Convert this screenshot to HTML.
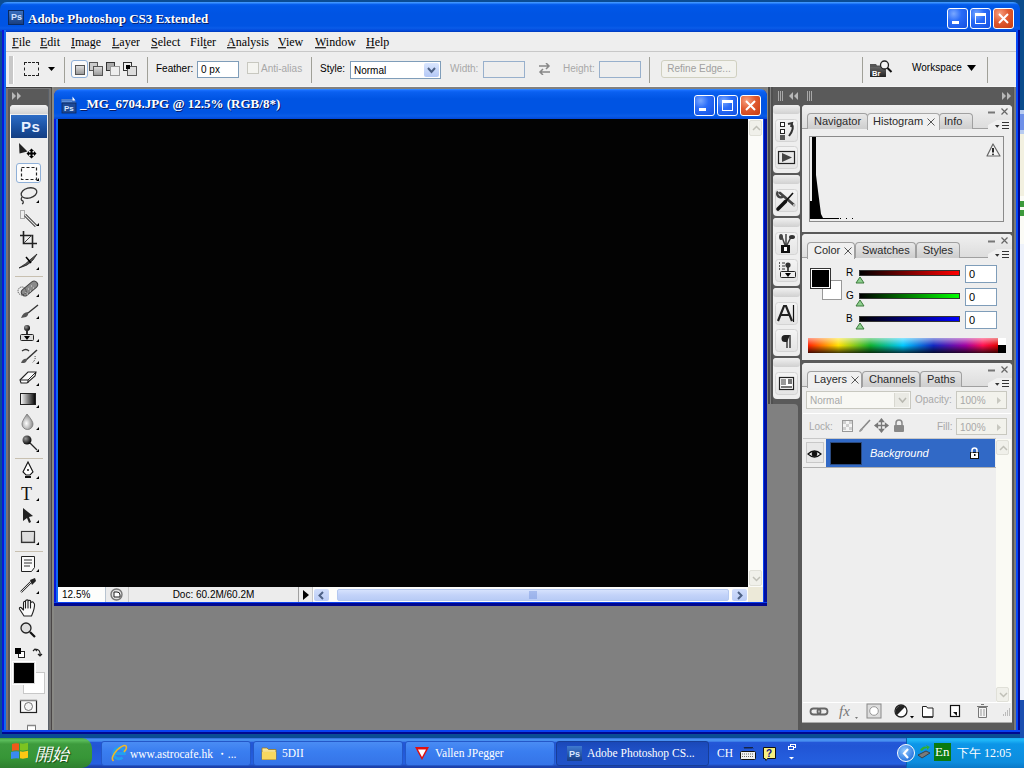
<!DOCTYPE html>
<html><head><meta charset="utf-8">
<style>
*{margin:0;padding:0;box-sizing:border-box}
html,body{width:1024px;height:768px;overflow:hidden;background:#0b4a8e;font-family:"Liberation Sans",sans-serif;font-size:11px;color:#000}
.a{position:absolute}
.serif{font-family:"Liberation Serif",serif}
/* main frame */
#frame{left:0;top:0;width:1024px;height:738px;background:#0a4c94}
#titlebar{left:0;top:2px;width:1020px;height:30px;border-radius:7px 7px 0 0;background:linear-gradient(#3d95ff 0,#3d95ff 1px,#0a62f0 2px,#0058e8 4px,#0054e3 12px,#0054e3 24px,#0a5ce8 26px,#0046d8 29px,#0036b0 30px)}
#lframe{left:2px;top:30px;width:4px;height:704px;background:linear-gradient(90deg,#0818d8 0,#0818d8 2px,#1068f0 2px)}
#rframe{left:1016px;top:30px;width:4px;height:704px;background:linear-gradient(90deg,#0848f8 0,#0848f8 2px,#000890 2px)}
#bframe{left:2px;top:730px;width:1018px;height:4px;background:linear-gradient(#0840f0 0,#0840f0 2px,#000890 2px)}
.ttext{color:#fff;font-weight:bold;font-size:13px;text-shadow:1px 1px 0 #0a1a60}
.xpbtn{width:21px;height:21px;border:1px solid #fff;border-radius:3px;background:radial-gradient(circle at 30% 25%,#7aa8ff 0,#2a6cf8 40%,#1450e0 100%)}
.xpclose{background:radial-gradient(circle at 30% 25%,#f8a080 0,#e05a30 45%,#c83c10 100%)}
#menubar{left:6px;top:32px;width:1010px;height:20px;background:#eeeeee;border-bottom:1px solid #c8c8c8}
.mi{top:3px;font-size:12px;font-family:"Liberation Serif",serif;transform:scaleY(1.1);transform-origin:0 0}
.mi u{text-decoration:underline}
#optbar{left:6px;top:52px;width:1010px;height:35px;background:#eeeeee;border-bottom:1px solid #f4f4f4}
.sep{width:1px;height:26px;top:5px;background:#a0a098}
.ob{font-size:10px}
.inp{background:#fff;border:1px solid #7f9db9;height:17px}
#work{left:7px;top:87px;width:1008px;height:643px;background:#808080}
</style></head><body>
<div class="a" id="frame"></div>
<div class="a" id="titlebar"></div>
<div class="a" id="lframe"></div>
<div class="a" id="rframe"></div>
<div class="a" id="bframe"></div>

<!-- title -->
<div class="a" style="left:8px;top:10px;width:16px;height:15px;background:linear-gradient(#3a70c0,#1a3f80);border:1px solid #0a2a60"><span class="a" style="left:2px;top:1px;color:#cfe0ff;font-size:9px;font-weight:bold">Ps</span></div>
<div class="a ttext serif" style="left:28px;top:11px">Adobe Photoshop CS3 Extended</div>
<div class="a xpbtn" style="left:947px;top:8px"><div class="a" style="left:4px;top:12px;width:7px;height:3px;background:#fff"></div></div>
<div class="a xpbtn" style="left:970px;top:8px"><div class="a" style="left:4px;top:4px;width:11px;height:11px;border:1px solid #fff;border-top-width:3px"></div></div>
<div class="a xpbtn xpclose" style="left:993px;top:8px"><svg class="a" style="left:4px;top:4px" width="11" height="11"><path d="M1 1L10 10M10 1L1 10" stroke="#fff" stroke-width="2"/></svg></div>

<!-- menubar -->
<div class="a" id="menubar"></div>
<div class="a mi" style="left:12px;top:34px"><u>F</u>ile</div>
<div class="a mi" style="left:40px;top:34px"><u>E</u>dit</div>
<div class="a mi" style="left:71px;top:34px"><u>I</u>mage</div>
<div class="a mi" style="left:112px;top:34px"><u>L</u>ayer</div>
<div class="a mi" style="left:151px;top:34px"><u>S</u>elect</div>
<div class="a mi" style="left:190px;top:34px">Fil<u>t</u>er</div>
<div class="a mi" style="left:227px;top:34px"><u>A</u>nalysis</div>
<div class="a mi" style="left:278px;top:34px"><u>V</u>iew</div>
<div class="a mi" style="left:315px;top:34px"><u>W</u>indow</div>
<div class="a mi" style="left:366px;top:34px"><u>H</u>elp</div>

<!-- options bar -->
<div class="a" id="optbar"></div>
<div class="a" style="left:9px;top:56px;width:5px;height:28px;background:#c8c8c8;border-right:1px solid #fff"></div>
<div class="a" style="left:24px;top:62px;width:15px;height:14px;border:1px dashed #222"></div>
<svg class="a" style="left:48px;top:67px" width="7" height="4"><path d="M0 0H7L3.5 4Z" fill="#000"/></svg>
<div class="a sep" style="left:64px;top:57px"></div>
<div class="a" style="left:71px;top:60px;width:17px;height:18px;border:1px solid #8fb0d8;border-radius:3px;background:#fafafa"><div class="a" style="left:3px;top:4px;width:10px;height:10px;background:linear-gradient(#ddd,#999);border:1px solid #555"></div></div>
<div class="a" style="left:89px;top:62px;width:9px;height:9px;background:#ccc;border:1px solid #555"></div>
<div class="a" style="left:93px;top:66px;width:10px;height:10px;background:linear-gradient(#ddd,#999);border:1px solid #555"></div>
<div class="a" style="left:106px;top:62px;width:9px;height:9px;background:#aaa;border:1px solid #333"></div>
<div class="a" style="left:110px;top:66px;width:10px;height:10px;background:#eee;border:1px solid #999"></div>
<div class="a" style="left:123px;top:62px;width:9px;height:9px;background:#eee;border:1px solid #333"></div>
<div class="a" style="left:127px;top:66px;width:10px;height:10px;background:#ddd;border:1px solid #555"></div>
<div class="a" style="left:126px;top:65px;width:4px;height:4px;background:#000"></div>
<div class="a sep" style="left:147px;top:57px"></div>
<div class="a ob" style="left:156px;top:63px">Feather:</div>
<div class="a inp" style="left:197px;top:61px;width:42px"><span class="a" style="left:3px;top:2px;font-size:10px">0 px</span></div>
<div class="a" style="left:247px;top:62px;width:12px;height:12px;border:1px solid #c8c8c0;background:#f4f4f0"></div>
<div class="a ob" style="left:261px;top:63px;color:#a8a8a8">Anti-alias</div>
<div class="a sep" style="left:311px;top:57px"></div>
<div class="a ob" style="left:320px;top:63px">Style:</div>
<div class="a inp" style="left:350px;top:61px;width:91px;height:18px"><span class="a" style="left:3px;top:3px;font-size:10px">Normal</span><div class="a" style="left:73px;top:1px;width:15px;height:14px;background:linear-gradient(#dae6fe,#b4c8f6);border-radius:2px"><svg class="a" style="left:3px;top:4px" width="9" height="7"><path d="M1 1L4.5 5L8 1" stroke="#4d6185" stroke-width="2" fill="none"/></svg></div></div>
<div class="a ob" style="left:450px;top:63px;color:#a8a8a8">Width:</div>
<div class="a inp" style="left:483px;top:61px;width:42px;background:#eeeeee;border-color:#98b0cc"></div>
<svg class="a" style="left:538px;top:63px" width="13" height="12"><path d="M1 3H11M8 0L11 3L8 6M12 9H2M5 6L2 9L5 12" stroke="#888" stroke-width="1.5" fill="none"/></svg>
<div class="a ob" style="left:563px;top:63px;color:#a8a8a8">Height:</div>
<div class="a inp" style="left:599px;top:61px;width:42px;background:#eeeeee;border-color:#98b0cc"></div>
<div class="a sep" style="left:649px;top:57px"></div>
<div class="a" style="left:661px;top:60px;width:76px;height:18px;border:1px solid #d0d0c0;border-radius:3px;background:#f2f2ee;color:#a0a0a0;text-align:center;line-height:16px;font-size:10px">Refine Edge...</div>
<div class="a sep" style="left:862px;top:57px"></div>
<svg class="a" style="left:869px;top:59px" width="26" height="20">
<path d="M1 5H7L8 6.5H17V18H1Z" fill="#555"/><rect x="1" y="8" width="16" height="10" rx="1" fill="url(#gbr)"/>
<text x="3" y="16.5" font-family="Liberation Sans" font-size="7.5" font-weight="bold" fill="#fff">Br</text>
<circle cx="15.5" cy="6" r="4" fill="#f4f4f4" stroke="#222" stroke-width="1.3"/><path d="M18.5 9L22.5 13" stroke="#111" stroke-width="2"/>
<defs><linearGradient id="gbr" x1="0" y1="0" x2="0" y2="1"><stop offset="0" stop-color="#666"/><stop offset="1" stop-color="#222"/></linearGradient></defs>
</svg>
<div class="a ob" style="left:912px;top:62px">Workspace</div>
<svg class="a" style="left:967px;top:65px" width="9" height="6"><path d="M0 0H9L4.5 6Z" fill="#000"/></svg>
<div class="a sep" style="left:987px;top:57px"></div>

<!-- workspace -->
<div class="a" id="work"></div>


<!-- toolbox -->
<div class="a" style="left:6px;top:87px;width:48px;height:643px;background:linear-gradient(90deg,#7a7070 0,#7a7070 2px,#5a5a5a 2px,#5a5a5a 42px,#5a6068 42px,#5a6068 43px,#727272 43px,#727272 45px,#4a4646 45px,#4a4646 46px,#888884 46px)"></div>
<div class="a" style="left:10px;top:105px;width:38px;height:625px;background:#eeeeee;border-left:1px solid #fff;border-radius:4px 4px 0 0"></div>
<div class="a" style="left:10px;top:105px;width:38px;height:9px;background:linear-gradient(#f2f2f2,#d2d2d2);border-radius:4px 4px 0 0"></div>
<div class="a" style="left:11px;top:115px;width:36px;height:23px;background:linear-gradient(#2c6cc6,#1a4f9e 60%,#143e82)"><span class="a" style="left:10px;top:3px;color:#e8f0ff;font-size:15px;font-weight:bold;letter-spacing:0.5px;font-family:'Liberation Sans',sans-serif">Ps</span></div>
<div class="a" style="left:16px;top:163px;width:25px;height:20px;border:1px solid #8fb0d8;border-radius:3px;background:#fcfcfc"></div>
<div class="a" style="left:15px;top:276px;width:28px;height:1px;background:#c8c0b0"></div>
<div class="a" style="left:15px;top:458px;width:28px;height:1px;background:#c8c0b0"></div>
<div class="a" style="left:15px;top:551px;width:28px;height:1px;background:#c8c0b0"></div>
<div class="a" style="left:23px;top:672px;width:22px;height:22px;background:#fff;border:1px solid #c8c8c8"></div>
<div class="a" style="left:13px;top:662px;width:22px;height:22px;background:#000;border:1px solid #d8d8d8;outline:1px solid #fff"></div>

<div class="a" style="left:6px;top:87px;width:46px;height:1px;background:#404040"></div><div class="a" style="left:8px;top:88px;width:42px;height:1px;background:#7a7a7a"></div><div class="a" style="left:769px;top:87px;width:247px;height:1px;background:#404040"></div><div class="a" style="left:771px;top:88px;width:242px;height:1px;background:#7a7a7a"></div>
<!-- doc window -->
<div class="a" style="left:54px;top:89px;width:713px;height:517px;border-radius:7px 7px 0 0;background:linear-gradient(90deg,#0818d8 0,#0818d8 2px,#1068f0 2px,#1068f0 4px,transparent 4px,transparent 709px,#0840f0 709px,#0840f0 710.5px,#0010a0 710.5px)"></div><div class="a" style="left:54px;top:602px;width:713px;height:4px;background:linear-gradient(#0840f0 0,#0840f0 1.5px,#000890 1.5px)"></div>
<div class="a" style="left:54px;top:89px;width:713px;height:30px;border-radius:7px 7px 0 0;background:linear-gradient(#3d95ff 0,#1a70ff 1px,#0a60f0 3px,#0054e3 10px,#0054e3 24px,#0a5ce8 27px,#0046d8 30px)"></div>
<div class="a" style="left:58px;top:119px;width:690px;height:468px;background:#030303"></div>
<div class="a" style="left:748px;top:119px;width:15px;height:468px;background:#fbfbf8"></div>
<div class="a" style="left:749px;top:120px;width:13px;height:16px;background:#f0f0ea;border:1px solid #e0e0d8;border-radius:2px"><svg class="a" style="left:2px;top:4px" width="9" height="6"><path d="M1 5L4.5 1.5L8 5" stroke="#c0c0b8" stroke-width="1.5" fill="none"/></svg></div>
<div class="a" style="left:749px;top:570px;width:13px;height:16px;background:#f0f0ea;border:1px solid #e0e0d8;border-radius:2px"><svg class="a" style="left:2px;top:5px" width="9" height="6"><path d="M1 1L4.5 4.5L8 1" stroke="#c0c0b8" stroke-width="1.5" fill="none"/></svg></div>
<div class="a" style="left:58px;top:587px;width:705px;height:15px;background:#fdfdfb"></div>
<div class="a" style="left:105px;top:587px;width:23px;height:15px;background:#ebebeb;border-left:1px solid #b8c4d0"></div>
<div class="a" style="left:128px;top:587px;width:170px;height:15px;background:#ececec;border-left:1px solid #c8c8c8;text-align:center;line-height:15px;font-size:10px">Doc: 60.2M/60.2M</div>
<div class="a" style="left:298px;top:587px;width:15px;height:15px;background:#ececec;border-left:1px solid #a0a0a0;border-right:1px solid #c8c8c8"><svg class="a" style="left:4px;top:3px" width="7" height="10"><path d="M0 0L6 5L0 10Z" fill="#000"/></svg></div>
<div class="a" style="left:314px;top:589px;width:15px;height:12px;background:linear-gradient(#d0ddfb,#bccdf6);border-radius:2px"><svg class="a" style="left:4px;top:2px" width="7" height="9"><path d="M5 1L1.5 4.5L5 8" stroke="#4d6185" stroke-width="2" fill="none"/></svg></div>
<div class="a" style="left:337px;top:589px;width:392px;height:12px;background:linear-gradient(#d6e2fd,#c3d3f9 50%,#b8cbf5);border-radius:2px;border:1px solid #b4c8f0"></div>
<svg class="a" style="left:529px;top:591px" width="9" height="8"><path d="M1 0V8M3 0V8M5 0V8M7 0V8" stroke="#7b98e0" stroke-width="1"/></svg>
<div class="a" style="left:732px;top:589px;width:15px;height:12px;background:linear-gradient(#d0ddfb,#bccdf6);border-radius:2px"><svg class="a" style="left:4px;top:2px" width="7" height="9"><path d="M2 1L5.5 4.5L2 8" stroke="#4d6185" stroke-width="2" fill="none"/></svg></div>
<div class="a" style="left:748px;top:587px;width:15px;height:15px;background:#ece9d8"></div>
<div class="a" style="left:62px;top:589px;font-size:10px">12.5%</div>
<div class="a serif ttext" style="left:80px;top:96px;font-size:13px">_MG_6704.JPG @ 12.5% (RGB/8*)</div>
<svg class="a" style="left:108px;top:587px" width="17" height="15"><circle cx="8.5" cy="7.5" r="5.5" fill="#e0e0e0" stroke="#777" stroke-width="1.4"/><path d="M6 5H9A3 3 0 0 1 12 8V10H6Z" fill="#fff" stroke="#222" stroke-width="1"/></svg>
<svg class="a" style="left:59px;top:96px" width="18" height="18">
<path d="M2 3H14L17 6V7H2Z" fill="#3a6cc0"/><path d="M3 4H13M3 5.5H13" stroke="#6a9ae0" stroke-width="0.8"/>
<path d="M13.5 0.5L16.5 4.5H13.5Z" fill="#fff"/>
<rect x="3" y="7" width="14" height="10" fill="#1e4a96" stroke="#0e2a60" stroke-width="0.8"/>
<text x="5" y="15" font-family="Liberation Sans" font-size="8" font-weight="bold" fill="#d8e6ff">Ps</text>
</svg>
<div class="a xpbtn" style="left:694px;top:95px"><div class="a" style="left:4px;top:12px;width:7px;height:3px;background:#fff"></div></div>
<div class="a xpbtn" style="left:717px;top:95px"><div class="a" style="left:4px;top:4px;width:11px;height:11px;border:1px solid #fff;border-top-width:3px"></div></div>
<div class="a xpbtn xpclose" style="left:740px;top:95px"><svg class="a" style="left:4px;top:4px" width="11" height="11"><path d="M1 1L10 10M10 1L1 10" stroke="#fff" stroke-width="2"/></svg></div>

<!-- right dock -->
<div class="a" style="left:769px;top:87px;width:247px;height:643px;background:#5a5a5a"></div><div class="a" style="left:1013px;top:87px;width:3px;height:643px;background:linear-gradient(90deg,#555 0,#555 0.5px,#7a7a7a 0.5px,#7a7a7a 2.5px,#504840 2.5px)"></div><div class="a" style="left:767px;top:87px;width:6px;height:317px;background:linear-gradient(90deg,#888880 0,#888880 1.5px,#484848 1.5px,#484848 3px,#808080 3px,#808080 4.5px,#505050 4.5px)"></div>
<div class="a" style="left:769px;top:404px;width:29px;height:326px;background:#808080;border-top-right-radius:4px"></div><div class="a" style="left:798px;top:404px;width:4px;height:326px;background:#585858"></div>
<div class="a" style="left:773px;top:105px;width:27px;height:68px;background:#eeeeee;border-radius:4px"></div>
<div class="a" style="left:773px;top:175px;width:27px;height:41px;background:#eeeeee;border-radius:4px"></div>
<div class="a" style="left:773px;top:218px;width:27px;height:68px;background:#eeeeee;border-radius:4px"></div>
<div class="a" style="left:773px;top:288px;width:27px;height:68px;background:#eeeeee;border-radius:4px"></div>
<div class="a" style="left:773px;top:358px;width:27px;height:41px;background:#eeeeee;border-radius:4px"></div>


<!-- dock top bar -->
<svg class="a" style="left:769px;top:87px" width="247" height="18">
<path d="M9.5 4V14M11.5 4V14M13.5 4V14M38.5 4V14M40.5 4V14M42.5 4V14" stroke="#a8a8a8" stroke-width="1"/>
<path d="M20 9L24 5V13Z M25 9L29 5V13Z" fill="#b8b8b8"/>
<path d="M237 9L233 5V13Z M242 9L238 5V13Z" fill="#b8b8b8"/>
</svg>
<svg class="a" style="left:7px;top:87px" width="45" height="18">
<path d="M5 5L9 9L5 13Z M10 5L14 9L10 13Z" fill="#b8b8b8"/>
</svg>

<!-- panels common -->
<style>
.pnl{background:#eeeeee;border-radius:4px 4px 0 0}
.tab{white-space:nowrap;height:16px;top:0;border:1px solid #a0a0a0;border-bottom:none;border-radius:4px 4px 0 0;background:linear-gradient(#e8e8e8,#cdcdcd);font-size:11px;line-height:15px;padding-left:6px;color:#2a2a2a}
.tab.on{background:#f0f0f0}
.pmin{width:9px;height:2px;background:#777}
.pfld{background:#fff;border:1px solid #7f9db9}
.dis{color:#a8a8a8}
</style>

<!-- histogram panel -->
<div class="a pnl" style="left:802px;top:105px;width:210px;height:127px"></div>
<div class="a" style="left:802px;top:105px;width:210px;height:24px;background:linear-gradient(#f0f0f0,#dcdcdc);border-radius:4px 4px 0 0"></div>
<div class="a" style="left:802px;top:128px;width:210px;height:1px;background:#a0a0a0"></div>
<div class="a tab" style="left:807px;top:113px;width:61px">Navigator</div>
<div class="a tab" style="left:939px;top:113px;width:34px;padding-left:4px">Info</div>
<div class="a tab on" style="left:867px;top:113px;width:73px;height:17px;border-color:#a8a8a8;padding-left:5px">Histogram<svg style="margin-left:4px;vertical-align:-1px" width="8" height="8"><path d="M0.5 0.5L7.5 7.5M7.5 0.5L0.5 7.5" stroke="#555" stroke-width="1"/></svg></div>
<div class="a" style="left:809px;top:136px;width:195px;height:86px;border:1px solid #8a8a8a;background:#eeeeee"></div>

<!-- color panel -->
<div class="a pnl" style="left:802px;top:234px;width:210px;height:126px"></div>
<div class="a" style="left:802px;top:234px;width:210px;height:24px;background:linear-gradient(#f0f0f0,#dcdcdc);border-radius:4px 4px 0 0"></div>
<div class="a" style="left:802px;top:257px;width:210px;height:1px;background:#a0a0a0"></div>
<div class="a tab on" style="left:807px;top:242px;width:48px;height:17px">Color<svg style="margin-left:4px;vertical-align:-1px" width="8" height="8"><path d="M0.5 0.5L7.5 7.5M7.5 0.5L0.5 7.5" stroke="#555" stroke-width="1"/></svg></div>
<div class="a tab" style="left:855px;top:242px;width:61px">Swatches</div>
<div class="a tab" style="left:916px;top:242px;width:44px">Styles</div>
<div class="a" style="left:822px;top:280px;width:20px;height:20px;background:#fff;border:1px solid #999"></div>
<div class="a" style="left:811px;top:269px;width:19px;height:19px;background:#000;border:1px solid #fff;outline:1px solid #333"></div>
<div class="a" style="left:846px;top:267px;font-size:10px">R</div>
<div class="a" style="left:846px;top:290px;font-size:10px">G</div>
<div class="a" style="left:846px;top:313px;font-size:10px">B</div>
<div class="a" style="left:859px;top:270px;width:101px;height:6px;background:linear-gradient(90deg,#000,#ff0000);border:1px solid #333"></div>
<div class="a" style="left:859px;top:293px;width:101px;height:6px;background:linear-gradient(90deg,#000,#00ff00);border:1px solid #333"></div>
<div class="a" style="left:859px;top:316px;width:101px;height:6px;background:linear-gradient(90deg,#000,#0000ff);border:1px solid #333"></div>
<svg class="a" style="left:855px;top:276px" width="10" height="8"><path d="M5 1L9 7H1Z" fill="#8fd08f" stroke="#3a7a3a"/></svg>
<svg class="a" style="left:855px;top:299px" width="10" height="8"><path d="M5 1L9 7H1Z" fill="#8fd08f" stroke="#3a7a3a"/></svg>
<svg class="a" style="left:855px;top:322px" width="10" height="8"><path d="M5 1L9 7H1Z" fill="#8fd08f" stroke="#3a7a3a"/></svg>
<div class="a pfld" style="left:965px;top:265px;width:32px;height:18px"><span class="a" style="left:3px;top:2px">0</span></div>
<div class="a pfld" style="left:965px;top:288px;width:32px;height:18px"><span class="a" style="left:3px;top:2px">0</span></div>
<div class="a pfld" style="left:965px;top:311px;width:32px;height:18px"><span class="a" style="left:3px;top:2px">0</span></div>
<div class="a" style="left:808px;top:338px;width:190px;height:15px;background:linear-gradient(90deg,#ff2000 0%,#ffe000 16%,#10b030 33%,#00c8ff 50%,#1028c0 66%,#a000a0 83%,#ff1050 92%,#e00000 100%)"></div>
<div class="a" style="left:808px;top:338px;width:190px;height:15px;background:linear-gradient(rgba(255,255,255,.55) 0,rgba(255,255,255,.1) 40%,rgba(0,0,0,0) 50%,rgba(0,0,0,.75) 100%)"></div>
<div class="a" style="left:998px;top:338px;width:8px;height:7px;background:#fff"></div>
<div class="a" style="left:998px;top:345px;width:8px;height:8px;background:#000"></div>

<!-- layers panel -->
<div class="a pnl" style="left:802px;top:363px;width:210px;height:360px;border-bottom:1px solid #aaa"></div>
<div class="a" style="left:802px;top:363px;width:210px;height:24px;background:linear-gradient(#f0f0f0,#dcdcdc);border-radius:4px 4px 0 0"></div>
<div class="a" style="left:802px;top:386px;width:210px;height:1px;background:#a0a0a0"></div>
<div class="a tab on" style="left:807px;top:371px;width:55px;height:17px">Layers<svg style="margin-left:4px;vertical-align:-1px" width="8" height="8"><path d="M0.5 0.5L7.5 7.5M7.5 0.5L0.5 7.5" stroke="#555" stroke-width="1"/></svg></div>
<div class="a tab" style="left:862px;top:371px;width:58px">Channels</div>
<div class="a tab" style="left:920px;top:371px;width:42px">Paths</div>
<div class="a" style="left:806px;top:391px;width:105px;height:18px;border:1px solid #c8c8c0;background:#f8f8f4"><span class="a dis" style="left:3px;top:3px;font-size:10px">Normal</span><div class="a" style="left:87px;top:1px;width:15px;height:14px;background:#eaeae4;border-left:1px solid #d8d8d0"><svg class="a" style="left:3px;top:4px" width="9" height="7"><path d="M1 1L4.5 5L8 1" stroke="#b8b8b0" stroke-width="1.5" fill="none"/></svg></div></div>
<div class="a dis" style="left:915px;top:394px;font-size:10px">Opacity:</div>
<div class="a" style="left:956px;top:391px;width:51px;height:18px;border:1px solid #c8c8c0;background:#f2f2ec"><span class="a dis" style="left:3px;top:3px;font-size:10px">100%</span><svg class="a" style="left:39px;top:4px" width="6" height="9"><path d="M1 1L5 4.5L1 8Z" fill="#c8c8c0"/></svg></div>
<div class="a" style="left:803px;top:413px;width:208px;height:1px;background:#c8c8c8;border-bottom:1px solid #fff"></div>
<div class="a dis" style="left:809px;top:421px;font-size:10px">Lock:</div>
<div class="a dis" style="left:937px;top:421px;font-size:10px">Fill:</div>
<div class="a" style="left:956px;top:418px;width:51px;height:17px;border:1px solid #c8c8c0;background:#f2f2ec"><span class="a dis" style="left:3px;top:3px;font-size:10px">100%</span><svg class="a" style="left:39px;top:4px" width="6" height="9"><path d="M1 1L5 4.5L1 8Z" fill="#c8c8c0"/></svg></div>
<div class="a" style="left:803px;top:438px;width:193px;height:1px;background:#c8c8c8"></div>
<div class="a" style="left:803px;top:467px;width:193px;height:1px;background:#b0b0b0"></div>
<div class="a" style="left:806px;top:442px;width:18px;height:21px;border:1px solid #c8c8c8;background:#e8e8e8"></div>
<div class="a" style="left:826px;top:439px;width:169px;height:28px;background:#3169c6"></div>
<div class="a" style="left:830px;top:442px;width:32px;height:23px;background:#000;border:1px solid #2a4a80"></div>
<div class="a" style="left:870px;top:447px;color:#fff;font-style:italic;font-size:11px">Background</div>
<div class="a" style="left:996px;top:439px;width:15px;height:264px;background:#fafaf4"></div>
<div class="a" style="left:996px;top:440px;width:13px;height:15px;background:#f0f0ea;border:1px solid #e0e0d8;border-radius:2px"><svg class="a" style="left:2px;top:4px" width="9" height="6"><path d="M1 5L4.5 1.5L8 5" stroke="#c0c0b8" stroke-width="1.5" fill="none"/></svg></div>
<div class="a" style="left:996px;top:687px;width:13px;height:15px;background:#f0f0ea;border:1px solid #e0e0d8;border-radius:2px"><svg class="a" style="left:2px;top:4px" width="9" height="6"><path d="M1 1L4.5 4.5L8 1" stroke="#c0c0b8" stroke-width="1.5" fill="none"/></svg></div>
<div class="a" style="left:803px;top:702px;width:208px;height:1px;background:#c0c0c0;border-bottom:1px solid #fff"></div>

<!-- taskbar -->
<div class="a" style="left:0;top:738px;width:1024px;height:30px;background:linear-gradient(#2a5ac8 0,#4890f0 1px,#4890f0 3px,#2458d8 4.5px,#2155d5 8px,#2560e0 26px,#1d44b0 28px,#1a3ea8 30px)"></div>
<div class="a" style="left:0;top:738px;width:92px;height:30px;border-radius:0 10px 10px 0;background:linear-gradient(#3c9a3c 0,#5dbf5d 2px,#3d9b3d 6px,#379637 20px,#2f7f2f 30px)"></div>
<div class="a serif" style="left:35px;top:743px;color:#fff;font-size:17px;font-style:italic;text-shadow:1px 1px 1px #1a4a1a">開始</div>
<div class="a" style="left:101px;top:741px;width:150px;height:25px;border-radius:3px;background:linear-gradient(#4a8cf4,#3a7ef0 40%,#3574e8);border:1px solid #2458c8"></div>
<div class="a" style="left:253px;top:741px;width:150px;height:25px;border-radius:3px;background:linear-gradient(#4a8cf4,#3a7ef0 40%,#3574e8);border:1px solid #2458c8"></div>
<div class="a" style="left:405px;top:741px;width:150px;height:25px;border-radius:3px;background:linear-gradient(#4a8cf4,#3a7ef0 40%,#3574e8);border:1px solid #2458c8"></div>
<div class="a" style="left:556px;top:741px;width:153px;height:25px;border-radius:3px;background:linear-gradient(#1a48b8,#1e4fc4 30%,#2052c8);border:1px solid #173e98"></div>
<div class="a serif" style="left:130px;top:747px;color:#fff;font-size:11.5px">www.astrocafe.hk ・...</div>
<div class="a serif" style="left:282px;top:747px;color:#fff;font-size:11.5px">5DII</div>
<div class="a serif" style="left:435px;top:747px;color:#fff;font-size:11.5px">Vallen JPegger</div>
<div class="a serif" style="left:587px;top:747px;color:#fff;font-size:11.5px">Adobe Photoshop CS...</div>
<div class="a serif" style="left:717px;top:747px;color:#fff;font-size:11.5px">CH</div>
<div class="a" style="left:906px;top:738px;width:118px;height:30px;background:linear-gradient(#18a8f0 0,#20b8f8 2px,#0c96e8 6px,#0d8dde 24px,#0a78c8 30px);border-left:1px solid #0a60b0"></div>
<div class="a" style="left:897px;top:744px;width:18px;height:18px;border-radius:50%;background:radial-gradient(circle at 40% 35%,#8ec8ff,#2f7ae0 70%);border:1px solid #fff"><svg class="a" style="left:4px;top:3px" width="9" height="11"><path d="M6 1L2 5.5L6 10" stroke="#fff" stroke-width="2.2" fill="none"/></svg></div>
<div class="a" style="left:934px;top:743px;width:17px;height:18px;background:#0a7a10"><span class="a serif" style="left:1px;top:1px;color:#fff;font-size:13px">En</span></div>
<div class="a serif" style="left:957px;top:745px;color:#fff;font-size:12px">下午 12:05</div>


<!-- toolbox icons -->
<svg class="a" style="left:0;top:0" width="60" height="730">
<defs>
<linearGradient id="gmet" x1="0" y1="0" x2="0" y2="1"><stop offset="0" stop-color="#fff"/><stop offset="1" stop-color="#555"/></linearGradient>
<linearGradient id="ggrad" x1="0" y1="0" x2="1" y2="0"><stop offset="0" stop-color="#fff"/><stop offset="1" stop-color="#000"/></linearGradient>
<radialGradient id="gball" cx="0.35" cy="0.35" r="0.7"><stop offset="0" stop-color="#999"/><stop offset="1" stop-color="#000"/></radialGradient>
<radialGradient id="gdrop" cx="0.4" cy="0.6" r="0.6"><stop offset="0" stop-color="#fff"/><stop offset="1" stop-color="#888"/></radialGradient>
</defs>
<g fill="#000">
<!-- corner triangles -->
<path d="M39 181h-3l3-3z M39 203h-3l3-3z M39 226h-3l3-3z M39 270h-3l3-3z M39 297h-3l3-3z M39 319h-3l3-3z M39 342h-3l3-3z M39 364h-3l3-3z M39 386h-3l3-3z M39 408h-3l3-3z M39 430h-3l3-3z M39 452h-3l3-3z M39 479h-3l3-3z M39 501h-3l3-3z M39 523h-3l3-3z M39 545h-3l3-3z M39 572h-3l3-3z M39 594h-3l3-3z"/>
</g>
<!-- move -->
<path d="M19 143L27.5 151.5L19.5 153.5Z" fill="#222"/>
<path d="M31.5 150.5V156.5M28.5 153.5H34.5" stroke="#000" stroke-width="2"/>
<path d="M31.5 148.5l-2.5 2.5h5zM31.5 158.5l-2.5-2.5h5zM26.5 153.5l2.5-2.5v5zM36.5 153.5l-2.5-2.5v5z" fill="#000"/>
<!-- marquee -->
<rect x="21.5" y="167.5" width="15" height="12" fill="none" stroke="#222" stroke-width="1.2" stroke-dasharray="3 2"/>
<!-- lasso -->
<ellipse cx="29" cy="193" rx="8" ry="5" fill="none" stroke="#333" stroke-width="1.3" transform="rotate(-15 29 193)"/>
<path d="M22 197q-2 3 1 4q1 2 -1 3" stroke="#333" stroke-width="1.2" fill="none"/>
<!-- magic wand -->
<path d="M25 215L36 226" stroke="#222" stroke-width="3"/><path d="M25 215L36 226" stroke="#ddd" stroke-width="1.2"/>
<rect x="20.5" y="210.5" width="4" height="8" fill="none" stroke="#666" stroke-width="1" stroke-dasharray="1 1"/>
<!-- crop -->
<path d="M20 235.5H32.5V248M23.5 231V243.5H37" stroke="#222" stroke-width="1.6" fill="none"/><path d="M24 243L32 235" stroke="#444" stroke-width="1"/>
<!-- slice -->
<path d="M19 268Q26 264 31 259L37 254L33 260Q28 266 19 268Z" fill="#555" stroke="#222" stroke-width="0.8"/><path d="M26 257L31 263" stroke="#000" stroke-width="1.5"/>
<!-- healing -->
<rect x="20" y="285" width="19" height="7" rx="3.5" fill="#8a8a8a" stroke="#444" transform="rotate(-40 29.5 288.5)"/><path d="M25 292h1M28 289h1M31 286h1M27 294h1M30 291h1M33 288h1" stroke="#ddd"/>
<circle cx="22" cy="291" r="4" fill="none" stroke="#333" stroke-dasharray="1 1"/>
<!-- brush -->
<path d="M38 305L28 313" stroke="#333" stroke-width="1.5"/><path d="M21 318q2-6 7-6q1 3-2 5z" fill="#555"/>
<!-- stamp -->
<circle cx="27" cy="328" r="3" fill="url(#gball)"/><path d="M27 330V335" stroke="#333" stroke-width="2"/>
<rect x="20.5" y="334.5" width="13" height="6" rx="1" fill="#ddd" stroke="#222"/><path d="M24 336H30L27 340Z" fill="#000"/>
<!-- history brush -->
<path d="M37 350L26 360" stroke="#333" stroke-width="1.5"/><path d="M21 363q2-5 6-4q0 3-3 4z" fill="#555"/>
<path d="M22 351q4-3 7 0" stroke="#333" stroke-width="1.3" fill="none"/><path d="M35 356q1 4-3 7" stroke="#333" stroke-dasharray="1 1" fill="none"/>
<!-- eraser -->
<path d="M20 380L28 372H36L35 376L27 383H21Z" fill="#fafafa" stroke="#222" stroke-width="1.1"/><path d="M20 380H28L36 372M28 380V383" stroke="#222" stroke-width="1" fill="none"/>
<!-- gradient -->
<rect x="20.5" y="393.5" width="15" height="11" fill="url(#ggrad)" stroke="#222"/>
<!-- blur -->
<path d="M27 414Q22 421 22 424A5 5 0 0 0 33 424Q33 421 27 414Z" fill="url(#gdrop)" stroke="#777" stroke-width="0.8"/>
<!-- dodge -->
<circle cx="27" cy="440" r="4.5" fill="url(#gball)"/><path d="M30 443L37 450" stroke="#222" stroke-width="1.3"/>
<!-- pen -->
<path d="M28 462L23 472L26 475H30L33 472Z" fill="#fff" stroke="#111" stroke-width="1.1"/><circle cx="28" cy="470" r="0.9" fill="#000"/><path d="M25 477H31" stroke="#111" stroke-width="2"/>
<!-- type -->
<text x="21" y="500" font-family="Liberation Serif" font-size="18" fill="#111">T</text>
<!-- path select -->
<path d="M23 508L33 516L29 517L31 522L29 523L27 518L23 521Z" fill="#222"/>
<!-- shape -->
<rect x="21.5" y="531.5" width="13" height="11" fill="url(#gmet)" stroke="#222" stroke-width="1.2" opacity="0.9"/>
<rect x="22.5" y="532.5" width="11" height="9" fill="#ddd"/>
<!-- notes -->
<path d="M21.5 556.5H34.5V567.5L31.5 571.5H21.5Z" fill="#fafafa" stroke="#222"/><path d="M24 560H32M24 563H32M24 566H30" stroke="#333"/>
<!-- eyedropper -->
<path d="M21 592L31 582" stroke="#222" stroke-width="2.2"/><path d="M21 592L31 582" stroke="#fff" stroke-width="0.8"/><path d="M30 580L35 578L36 581L32 585Z" fill="#222"/>
<!-- hand -->
<path d="M24 616L19.5 609Q19 607 21 607.5L23.5 610V603Q23.5 601 25.5 601.5V608V601Q26 599.5 28 600V608V601Q28.5 600 30.5 600.5V608V603Q31 601.5 33 602L34.5 604Q35 608 31.5 616Z" fill="#fafafa" stroke="#222" stroke-width="1.1" stroke-linejoin="round"/>
<!-- zoom -->
<circle cx="26" cy="628" r="5" fill="#ddd" stroke="#222" stroke-width="1.3"/><path d="M30 632L35 637" stroke="#111" stroke-width="2.2"/>
<!-- default colors -->
<rect x="18.5" y="651.5" width="6" height="6" fill="#fff" stroke="#222"/><rect x="15" y="648" width="6" height="6" fill="#000"/>
<!-- swap -->
<path d="M33 651L35 649L37 651M35 649Q41 649 40 656M38 654L40 656L42 654" stroke="#222" stroke-width="1.2" fill="none"/>
<!-- quick mask -->
<rect x="20.5" y="700.5" width="16" height="12" fill="#fafafa" stroke="#222" stroke-width="1.2"/><path d="M20 700.5H37" stroke="#888" stroke-width="1.2"/><circle cx="28.5" cy="706.5" r="4" fill="#f4f4f4" stroke="#555" stroke-width="0.8"/>
<!-- screen mode -->
<path d="M27.5 730V725.5H35.5V730" fill="#fff" stroke="#777"/><path d="M27 725.5H36" stroke="#888" stroke-width="1.5"/>
</svg>


<!-- dock column icons -->
<svg class="a" style="left:766px;top:100px" width="40" height="310">
<defs>
<linearGradient id="ghdr" x1="0" y1="0" x2="0" y2="1"><stop offset="0" stop-color="#f0f0f0"/><stop offset="1" stop-color="#d0d0d0"/></linearGradient>
<linearGradient id="gbtn" x1="0" y1="0" x2="0" y2="1"><stop offset="0" stop-color="#f4f4f4"/><stop offset="1" stop-color="#e4e4e4"/></linearGradient>
</defs>
<g fill="url(#ghdr)">
<rect x="7" y="5" width="27" height="9" rx="3"/>
<rect x="7" y="75" width="27" height="9" rx="3"/>
<rect x="7" y="118" width="27" height="9" rx="3"/>
<rect x="7" y="188" width="27" height="9" rx="3"/>
<rect x="7" y="258" width="27" height="9" rx="3"/>
</g>
<g fill="url(#gbtn)" stroke="#d4d4d4">
<rect x="9.5" y="19.5" width="22" height="22" rx="3"/>
<rect x="9.5" y="46.5" width="22" height="22" rx="3"/>
<rect x="9.5" y="89.5" width="22" height="22" rx="3"/>
<rect x="9.5" y="132.5" width="22" height="22" rx="3"/>
<rect x="9.5" y="159.5" width="22" height="22" rx="3"/>
<rect x="9.5" y="202.5" width="22" height="22" rx="3"/>
<rect x="9.5" y="229.5" width="22" height="22" rx="3"/>
<rect x="9.5" y="272.5" width="22" height="22" rx="3"/>
</g>
<!-- history -->
<rect x="14.5" y="22.5" width="4" height="4" fill="#fff" stroke="#222"/>
<rect x="14.5" y="29.5" width="4" height="4" fill="#fff" stroke="#222"/>
<rect x="14" y="35" width="5" height="5" fill="#555"/>
<path d="M22 24L26 23L25 27M25.5 23.5Q29 28 23 36" stroke="#333" stroke-width="2" fill="none"/>
<!-- actions -->
<rect x="12.5" y="51.5" width="16" height="12" fill="#e8e8e8" stroke="#222" stroke-width="1.2"/>
<path d="M16 53L26 57.5L16 62Z" fill="#444"/>
<!-- tool presets -->
<path d="M14 93L28 105" stroke="#444" stroke-width="2.6" stroke-linecap="round"/>
<path d="M12 91.5A3.5 3.5 0 0 0 17.5 96" stroke="#444" stroke-width="2.5" fill="none"/>
<circle cx="28" cy="105" r="1" fill="#ddd"/>
<path d="M19 102L27 93" stroke="#111" stroke-width="1.6"/>
<path d="M12 109L19.5 101.5" stroke="#111" stroke-width="3.6" stroke-linecap="round"/>
<!-- brushes -->
<rect x="15" y="145" width="9" height="8" fill="#111"/><rect x="18" y="147" width="3" height="4" fill="#fff"/>
<path d="M19 145L16 137M20 145V134M21 145L25 137" stroke="#444" stroke-width="1.5"/>
<ellipse cx="15" cy="137" rx="2" ry="3" fill="#444"/><ellipse cx="26" cy="137" rx="3" ry="2" fill="#333"/>
<!-- clone source/tool -->
<path d="M13 163H14M13 166H14M13 169H14" stroke="#333" stroke-width="1.4"/><path d="M16 163H19M16 166H19M16 169H19" stroke="#333"/>
<circle cx="22" cy="165" r="2.6" fill="#333"/><path d="M22 167V171" stroke="#222" stroke-width="1.6"/>
<rect x="14.5" y="171.5" width="15" height="6" rx="1" fill="#eee" stroke="#222"/><path d="M19 173H25L22 177Z" fill="#000"/>
<!-- character -->
<path d="M12 221L18 206H20L26 221M14.5 215H23.5" stroke="#222" stroke-width="2.2" fill="none"/><path d="M27.5 205V222" stroke="#111" stroke-width="1.2"/>
<!-- paragraph -->
<path d="M21 235V248M24 235V248" stroke="#222" stroke-width="1.3"/><path d="M24 235H19A3.5 3.5 0 0 0 19 242H21" fill="#222"/>
<!-- comps -->
<rect x="13.5" y="277.5" width="14" height="12" fill="#fff" stroke="#222" stroke-width="1.2"/>
<path d="M15 280H20M15 282H20M15 284H20" stroke="#333"/><rect x="22" y="279" width="4" height="5" fill="#777"/><rect x="15" y="286" width="11" height="2" fill="#777"/>
</svg>


<!-- panel deco -->
<svg class="a" style="left:980px;top:105px" width="32" height="26">
<path d="M8 20V24H32V15H17Z" fill="#f0f0f0"/>
<path d="M8 7.5H15" stroke="#777" stroke-width="2"/>
<path d="M21.5 3.5L27.5 9.5M27.5 3.5L21.5 9.5" stroke="#666" stroke-width="1.2"/>
<path d="M15 20H19.5L17.25 22.7Z" fill="#333"/>
<path d="M22 17.5H29M22 20.5H29M22 23.5H29" stroke="#333" stroke-width="1.2"/>
</svg>
<svg class="a" style="left:980px;top:234px" width="32" height="26">
<path d="M8 20V24H32V15H17Z" fill="#f0f0f0"/>
<path d="M8 7.5H15" stroke="#777" stroke-width="2"/>
<path d="M21.5 3.5L27.5 9.5M27.5 3.5L21.5 9.5" stroke="#666" stroke-width="1.2"/>
<path d="M15 20H19.5L17.25 22.7Z" fill="#333"/>
<path d="M22 17.5H29M22 20.5H29M22 23.5H29" stroke="#333" stroke-width="1.2"/>
</svg>
<svg class="a" style="left:980px;top:363px" width="32" height="26">
<path d="M8 20V24H32V15H17Z" fill="#f0f0f0"/>
<path d="M8 7.5H15" stroke="#777" stroke-width="2"/>
<path d="M21.5 3.5L27.5 9.5M27.5 3.5L21.5 9.5" stroke="#666" stroke-width="1.2"/>
<path d="M15 20H19.5L17.25 22.7Z" fill="#333"/>
<path d="M22 17.5H29M22 20.5H29M22 23.5H29" stroke="#333" stroke-width="1.2"/>
</svg>

<!-- histogram graph -->
<svg class="a" style="left:809px;top:136px" width="60" height="85">
<path d="M1 83V65H3V1H7V39L9 55L12 78L14 82H30V83Z" fill="#000"/>
<path d="M31 82.5H32M37 82.5H38M43 82.5H44" stroke="#000"/>
</svg>
<svg class="a" style="left:986px;top:143px" width="15" height="14">
<path d="M7 1L14 13H1Z" fill="#f4f4f4" stroke="#666" stroke-width="1.2" stroke-linejoin="round"/>
<path d="M7 5V9.5" stroke="#111" stroke-width="1.8"/><circle cx="7" cy="11.3" r="0.9" fill="#111"/>
</svg>
<!-- right desktop strip -->
<div class="a" style="left:1020px;top:0;width:4px;height:110px;background:#0a4c8c"></div>
<div class="a" style="left:1020px;top:110px;width:4px;height:24px;background:#b8cbf0"></div>
<div class="a" style="left:1020px;top:114px;width:4px;height:16px;background:#6e90e8"></div>
<div class="a" style="left:1020px;top:134px;width:4px;height:62px;background:#f2f0e0"></div>
<div class="a" style="left:1020px;top:196px;width:4px;height:48px;background:#fbfbf6"></div>
<div class="a" style="left:1020px;top:201px;width:4px;height:6px;background:#3c9a3c"></div>
<div class="a" style="left:1020px;top:210px;width:4px;height:6px;background:#3c9a3c"></div>
<div class="a" style="left:1020px;top:244px;width:4px;height:456px;background:#eef2fb"></div>
<div class="a" style="left:1020px;top:700px;width:4px;height:38px;background:#1a4fb0"></div>


<!-- layer panel icons -->
<svg class="a" style="left:800px;top:410px" width="220" height="320">
<!-- lock icons -->
<rect x="42.5" y="10.5" width="10" height="11" fill="#f4f4f4" stroke="#999"/>
<path d="M43 11h3v3h-3zM49 11h3v3h-3zM46 14h3v3h-3zM43 17h3v3h-3zM49 17h3v3h-3z" fill="#cfcfcf"/>
<path d="M60 21L70 10" stroke="#888" stroke-width="1.6"/><path d="M59 22q1-4 4-4q0 3-4 4z" fill="#999"/>
<path d="M81.5 9V22M75 15.5H88M81.5 9l-2 2.5h4zM81.5 22l-2-2.5h4zM75 15.5l2.5-2v4zM88 15.5l-2.5-2v4z" stroke="#777" stroke-width="1.3" fill="#777"/>
<rect x="94" y="15" width="10" height="7" rx="1" fill="#888"/><path d="M96 15V13A3 3 0 0 1 102 13V15" stroke="#888" stroke-width="1.5" fill="none"/>
<!-- eye -->
<path d="M8 44Q14.5 38 21 44Q14.5 50 8 44Z" fill="#fff" stroke="#111" stroke-width="1.2"/><circle cx="14.5" cy="44" r="2.8" fill="#111"/>
<!-- layer lock -->
<rect x="170.5" y="42.5" width="8" height="6" fill="#fff" stroke="#111"/><path d="M172 42.5V40.5A2.5 2.5 0 0 1 177 40.5V42.5" stroke="#fff" stroke-width="1.5" fill="none"/><rect x="174" y="44" width="1.5" height="2" fill="#111"/>
<!-- bottom icons -->
<g transform="translate(0,300)">
<rect x="10.5" y="-1.5" width="10" height="6" rx="3" fill="none" stroke="#666" stroke-width="1.8"/>
<rect x="17.5" y="-1.5" width="10" height="6" rx="3" fill="none" stroke="#666" stroke-width="1.8"/>
<text x="39" y="6" font-family="Liberation Serif" font-style="italic" font-size="15" fill="#777">fx</text>
<path d="M55 7h3l-1.5 2z" fill="#777"/>
<rect x="67" y="-6" width="14" height="14" fill="#ddd" stroke="#888"/><circle cx="74" cy="1" r="4.3" fill="#fff" stroke="#999"/>
<circle cx="101" cy="1" r="6" fill="#fff" stroke="#222" stroke-width="1.3"/><path d="M105.2 -3.2A6 6 0 0 0 96.8 5.2Z" fill="#222"/>
<path d="M110 6h4l-2 2.5z" fill="#000"/>
<path d="M122.5 -3.5h4l1 1.5h5.5v9h-10.5z" fill="#fff" stroke="#222"/><path d="M123 7h10" stroke="#222" stroke-width="1.5"/>
<rect x="150.5" y="-4.5" width="9" height="11" fill="#fff" stroke="#111" stroke-width="1.2"/><path d="M153 2l4 4v-4z" fill="#111"/>
<path d="M178.5 -2.5h8v10h-8z" fill="#f4f4f4" stroke="#777"/><path d="M177 -3.5h11M181 -5.5h3" stroke="#777" stroke-width="1.2"/><path d="M181 -1v7M184 -1v7" stroke="#999"/>
<path d="M209 5h1M207 5h1M205 5h1M209 3h1M207 3h1M209 1h1M203 5h1M205 3h1M207 1h1M209 -1h1" stroke="#888"/>
</g>
</svg>


<!-- taskbar icons -->
<svg class="a" style="left:0;top:736px" width="1024" height="32">
<defs>
<radialGradient id="gie" cx="0.4" cy="0.4" r="0.6"><stop offset="0" stop-color="#bfe6ff"/><stop offset="1" stop-color="#1f78d8"/></radialGradient>
<linearGradient id="gfold" x1="0" y1="0" x2="0" y2="1"><stop offset="0" stop-color="#fff2a8"/><stop offset="1" stop-color="#d8a838"/></linearGradient>
<linearGradient id="gps" x1="0" y1="0" x2="0" y2="1"><stop offset="0" stop-color="#3f7ad0"/><stop offset="1" stop-color="#173e86"/></linearGradient>
</defs>
<!-- windows logo -->
<g transform="translate(11,7) skewY(-4)">
<path d="M1 1Q4 0 8 1V8Q4 7 1 8Z" fill="#f05a1a"/>
<path d="M9 1Q13 2 17 1V8Q13 9 9 8Z" fill="#7cc320"/>
<path d="M0 9Q4 8 8 9V16Q4 15 0 16Z" fill="#3a8af0"/>
<path d="M9 9Q13 10 17 9V16Q13 17 9 16Z" fill="#fcc814"/>
</g>
<!-- IE -->
<path d="M114 17.5H124.5A5.5 5.5 0 1 0 122.5 21.5" stroke="#22a0f0" stroke-width="2.8" fill="none"/>
<path d="M113.5 25Q110 22 117 14Q124 8 126 10Q127.5 12 124 16" stroke="#f0b828" stroke-width="1.6" fill="none"/>
<!-- folder -->
<path d="M262 12h5l1.5 1.5h7.5v10h-14z" fill="url(#gfold)" stroke="#a07818" stroke-width="0.8"/>
<path d="M262 16h14v7.5h-14z" fill="#f8d860"/>
<!-- red triangle -->
<path d="M415 11H429L422 24Z" fill="#e01010"/><path d="M418 13.5H426L422 21Z" fill="#fff"/>
<!-- ps -->
<rect x="567" y="10" width="15" height="15" fill="url(#gps)"/><text x="569" y="21" font-family="Liberation Sans" font-size="9" font-weight="bold" fill="#d8e6ff">Ps</text>
<!-- keyboard -->
<rect x="740.5" y="15.5" width="15" height="8" rx="1" fill="#f0f0f0" stroke="#111"/>
<path d="M742 18h12M742 20.5h12" stroke="#666" stroke-dasharray="1 1"/>
<path d="M744 11l1 1.5 1-1.5 1 1.5 1-1.5 1 1.5 1-1.5 1 1.5 1-1.5 1 1.5" stroke="#111" fill="none" stroke-width="0.8"/>
<!-- help -->
<path d="M763.5 11.5h12v11h-8l-1.5 2-1-2h-1.5z" fill="#f8f080" stroke="#111"/>
<text x="766" y="21" font-family="Liberation Sans" font-weight="bold" font-size="10" fill="#101080">?</text>
<!-- restore -->
<rect x="790.5" y="8.5" width="5" height="3" fill="none" stroke="#fff"/><rect x="788.5" y="10.5" width="5" height="3" fill="#2458d0" stroke="#fff"/>
<path d="M789 21H794L791.5 23.5Z" fill="#fff"/>
<!-- tray icon -->
<path d="M918 19l8-4 4 2-8 5z" fill="#7a7a7a" stroke="#333" stroke-width="0.8"/>
<path d="M920 14q3-5 7-3l-1-2 4 2-3 3v-2q-3 0-5 3z" fill="#30b030"/>
</svg>

</body></html>
